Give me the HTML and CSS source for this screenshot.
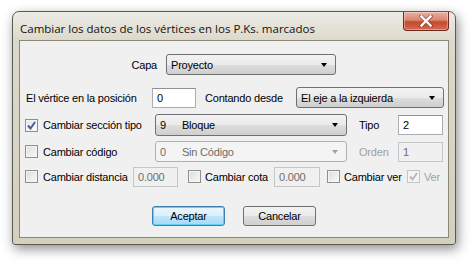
FILE: index.html
```html
<!DOCTYPE html>
<html>
<head>
<meta charset="utf-8">
<link rel="stylesheet" href="styles.css">
</head>
<body>
<div class="stage">
  <div class="window">
    <div class="titlebar">
      <span class="title">Cambiar los datos de los vértices en los P.Ks. marcados</span>
      <div class="close"><svg width="14" height="12" viewBox="0 0 14 12"><path d="M2 1 L12 11 M12 1 L2 11" stroke="#6a2a22" stroke-width="4" stroke-linecap="square" opacity="0.5"/><path d="M2.5 1.5 L11.5 10.5 M11.5 1.5 L2.5 10.5" stroke="#fff" stroke-width="2.4" stroke-linecap="square"/></svg></div>
    </div>
    <div class="client">
      <div class="row r1">
        <span class="lbl capa">Capa</span>
        <div class="combo w170"><span>Proyecto</span><i class="arrow"></i></div>
      </div>
      <div class="row r2">
        <span class="lbl pos">El vértice en la posición</span>
        <div class="input w44">0</div>
        <span class="lbl cont">Contando desde</span>
        <div class="combo w148"><span>El eje a la izquierda</span><i class="arrow"></i></div>
      </div>
      <div class="row r3">
        <span class="cb checked"><svg width="9" height="9" viewBox="0 0 9 9"><path d="M1 4.5 L3.5 7.5 L8 1" fill="none" stroke="#4a5f97" stroke-width="2"/></svg></span>
        <span class="lbl cbl w112">Cambiar sección tipo</span>
        <div class="combo w192 tall"><span><b class="num">9</b>Bloque</span><i class="arrow"></i></div>
        <span class="lbl tipo">Tipo</span>
        <div class="input w45">2</div>
      </div>
      <div class="row r4">
        <span class="cb"></span>
        <span class="lbl cbl w112">Cambiar código</span>
        <div class="combo w192 disabled"><span><b class="num">0</b>Sin Código</span><i class="arrow"></i></div>
        <span class="lbl tipo dis">Orden</span>
        <div class="input w45 disabled">1</div>
      </div>
      <div class="row r5">
        <span class="cb"></span>
        <span class="lbl cbl w90">Cambiar distancia</span>
        <div class="input w45 disabled">0.000</div>
        <span class="cb m10"></span>
        <span class="lbl cbl4 w69">Cambiar cota</span>
        <div class="input w46 disabled">0.000</div>
        <span class="cb m7"></span>
        <span class="lbl cbl4 w63">Cambiar ver</span>
        <span class="cb disabled checked"><svg width="9" height="9" viewBox="0 0 9 9"><path d="M1 4.5 L3.5 7.5 L8 1" fill="none" stroke="#b8b8b8" stroke-width="2"/></svg></span>
        <span class="lbl cbl4 dis">Ver</span>
      </div>
      <div class="row r6">
        <button class="btn default">Aceptar</button>
        <button class="btn">Cancelar</button>
      </div>
    </div>
  </div>
</div>
</body>
</html>
```
FILE: styles.css
```css
html, body {
  margin: 0;
  padding: 0;
  background: #ffffff;
}
.stage {
  width: 476px;
  height: 261px;
  padding: 11px 0 0 12px;
  box-sizing: border-box;
}
.window {
  width: 444px;
  height: 234px;
  box-sizing: border-box;
  border: 1px solid #5a5a52;
  border-radius: 7px 7px 3px 3px;
  background: linear-gradient(#ecebe6 0px, #dcd8ca 30px, #d5d0bc 100%);
  box-shadow: 2px 4px 12px rgba(0,0,0,0.45);
  padding: 0 6px 6px 6px;
  display: flex;
  flex-direction: column;
  font-family: "Liberation Sans", Arial, sans-serif;
  font-size: 11px;
  letter-spacing: -0.2px;
  color: #000;
}
.titlebar {
  height: 28px;
  display: flex;
  align-items: flex-start;
  justify-content: space-between;
  flex: none;
}
.title {
  font-family: "Open Sans", "Liberation Sans", sans-serif;
  font-size: 11.5px;
  letter-spacing: 0;
  margin: 9px 0 0 1px;
  color: #111;
}
.close {
  width: 46px;
  height: 19px;
  box-sizing: border-box;
  border: 1px solid #6b2a22;
  border-top: none;
  border-radius: 0 0 4px 4px;
  background: linear-gradient(#eab0a2 0%, #d98670 45%, #c44a30 55%, #d46a4f 100%);
  display: flex;
  align-items: center;
  justify-content: center;
  box-shadow: inset 0 0 0 1px rgba(255,255,255,0.35);
}
.client {
  flex: 1;
  background: #f0f0f0;
  border: 1px solid #8a8777;
}
.row {
  display: flex;
  align-items: center;
  height: 21px;
}
.r1 { margin-top: 13px; }
.r2 { margin-top: 12px; }
.r3 { margin-top: 6px; height: 22px; }
.r4 { margin-top: 5px; }
.r5 { margin-top: 4px; }
.r6 { margin-top: 19px; height: 20px; padding-left: 132px; gap: 18px; }
.lbl { white-space: nowrap; }
.dis { color: #a0a0a0; }
.capa { width: 137px; text-align: right; margin-right: 9px; }
.pos { margin-left: 6px; width: 126px; }
.cont { margin-left: 9px; width: 91px; }
.tipo { margin-left: 12px; width: 39px; }
.cbl { margin-left: 5px; }
.cbl4 { margin-left: 4px; }
.w112 { width: 112px; }
.w90 { width: 90px; }
.w69 { width: 69px; }
.w63 { width: 63px; }
.combo {
  height: 21px;
  box-sizing: border-box;
  border: 1px solid #707070;
  border-radius: 3px;
  background: linear-gradient(#f2f2f2 0%, #ebebeb 50%, #dddddd 51%, #cfcfcf 100%);
  display: flex;
  align-items: center;
  justify-content: space-between;
  padding: 0 8px 0 4px;
}
.combo.tall { height: 22px; }
.combo.disabled {
  background: #f4f4f4;
  border-color: #adb2b5;
  color: #6d6d6d;
}
.combo.disabled .arrow { border-top-color: #a0a0a0; }
.num { font-weight: normal; margin-right: 16px; }
.arrow {
  width: 0;
  height: 0;
  border-left: 3.5px solid transparent;
  border-right: 3.5px solid transparent;
  border-top: 4px solid #000;
}
.w170 { width: 170px; }
.w148 { width: 148px; }
.w192 { width: 192px; }
.input {
  height: 20px;
  box-sizing: border-box;
  border: 1px solid #abadb3;
  border-top-color: #8e9196;
  background: #fff;
  display: flex;
  align-items: center;
  padding-left: 4px;
}
.input.disabled {
  background: #f0f0f0;
  border-color: #c4c6c8;
  color: #6d6d6d;
}
.w44 { width: 44px; }
.w45 { width: 45px; }
.w46 { width: 46px; }
.cb {
  width: 13px;
  height: 13px;
  box-sizing: border-box;
  border: 1px solid #8e8f8f;
  background: linear-gradient(135deg, #dcdcdc 0%, #f4f4f4 80%, #ffffff 100%);
  box-shadow: inset 0 0 0 1px #f4f4f4;
  display: inline-flex;
  align-items: center;
  justify-content: center;
  flex: none;
}
.r3 .cb, .r4 .cb, .r5 > .cb:first-child { margin-left: 5px; }
.cb.checked { background: linear-gradient(135deg, #e4e4e4, #ffffff); }
.cb.disabled { border-color: #c6c6c6; background: #f4f4f4; margin-left: 0; }
.m10 { margin-left: 10px; }
.m7 { margin-left: 7px; }
.btn {
  width: 73px;
  height: 20px;
  box-sizing: border-box;
  border: 1px solid #707070;
  border-radius: 3px;
  background: linear-gradient(#f2f2f2 0%, #ebebeb 50%, #dddddd 51%, #cfcfcf 100%);
  font-family: "Liberation Sans", Arial, sans-serif;
  font-size: 11px;
  letter-spacing: -0.2px;
  color: #000;
  padding: 0;
}
.btn.default {
  border-color: #3c7fb1;
  background: linear-gradient(#eaf6fd 0%, #d9f0fc 50%, #bee6fd 51%, #a7d9f5 100%);
  box-shadow: inset 0 0 0 1px #5fd2f6;
}
```
